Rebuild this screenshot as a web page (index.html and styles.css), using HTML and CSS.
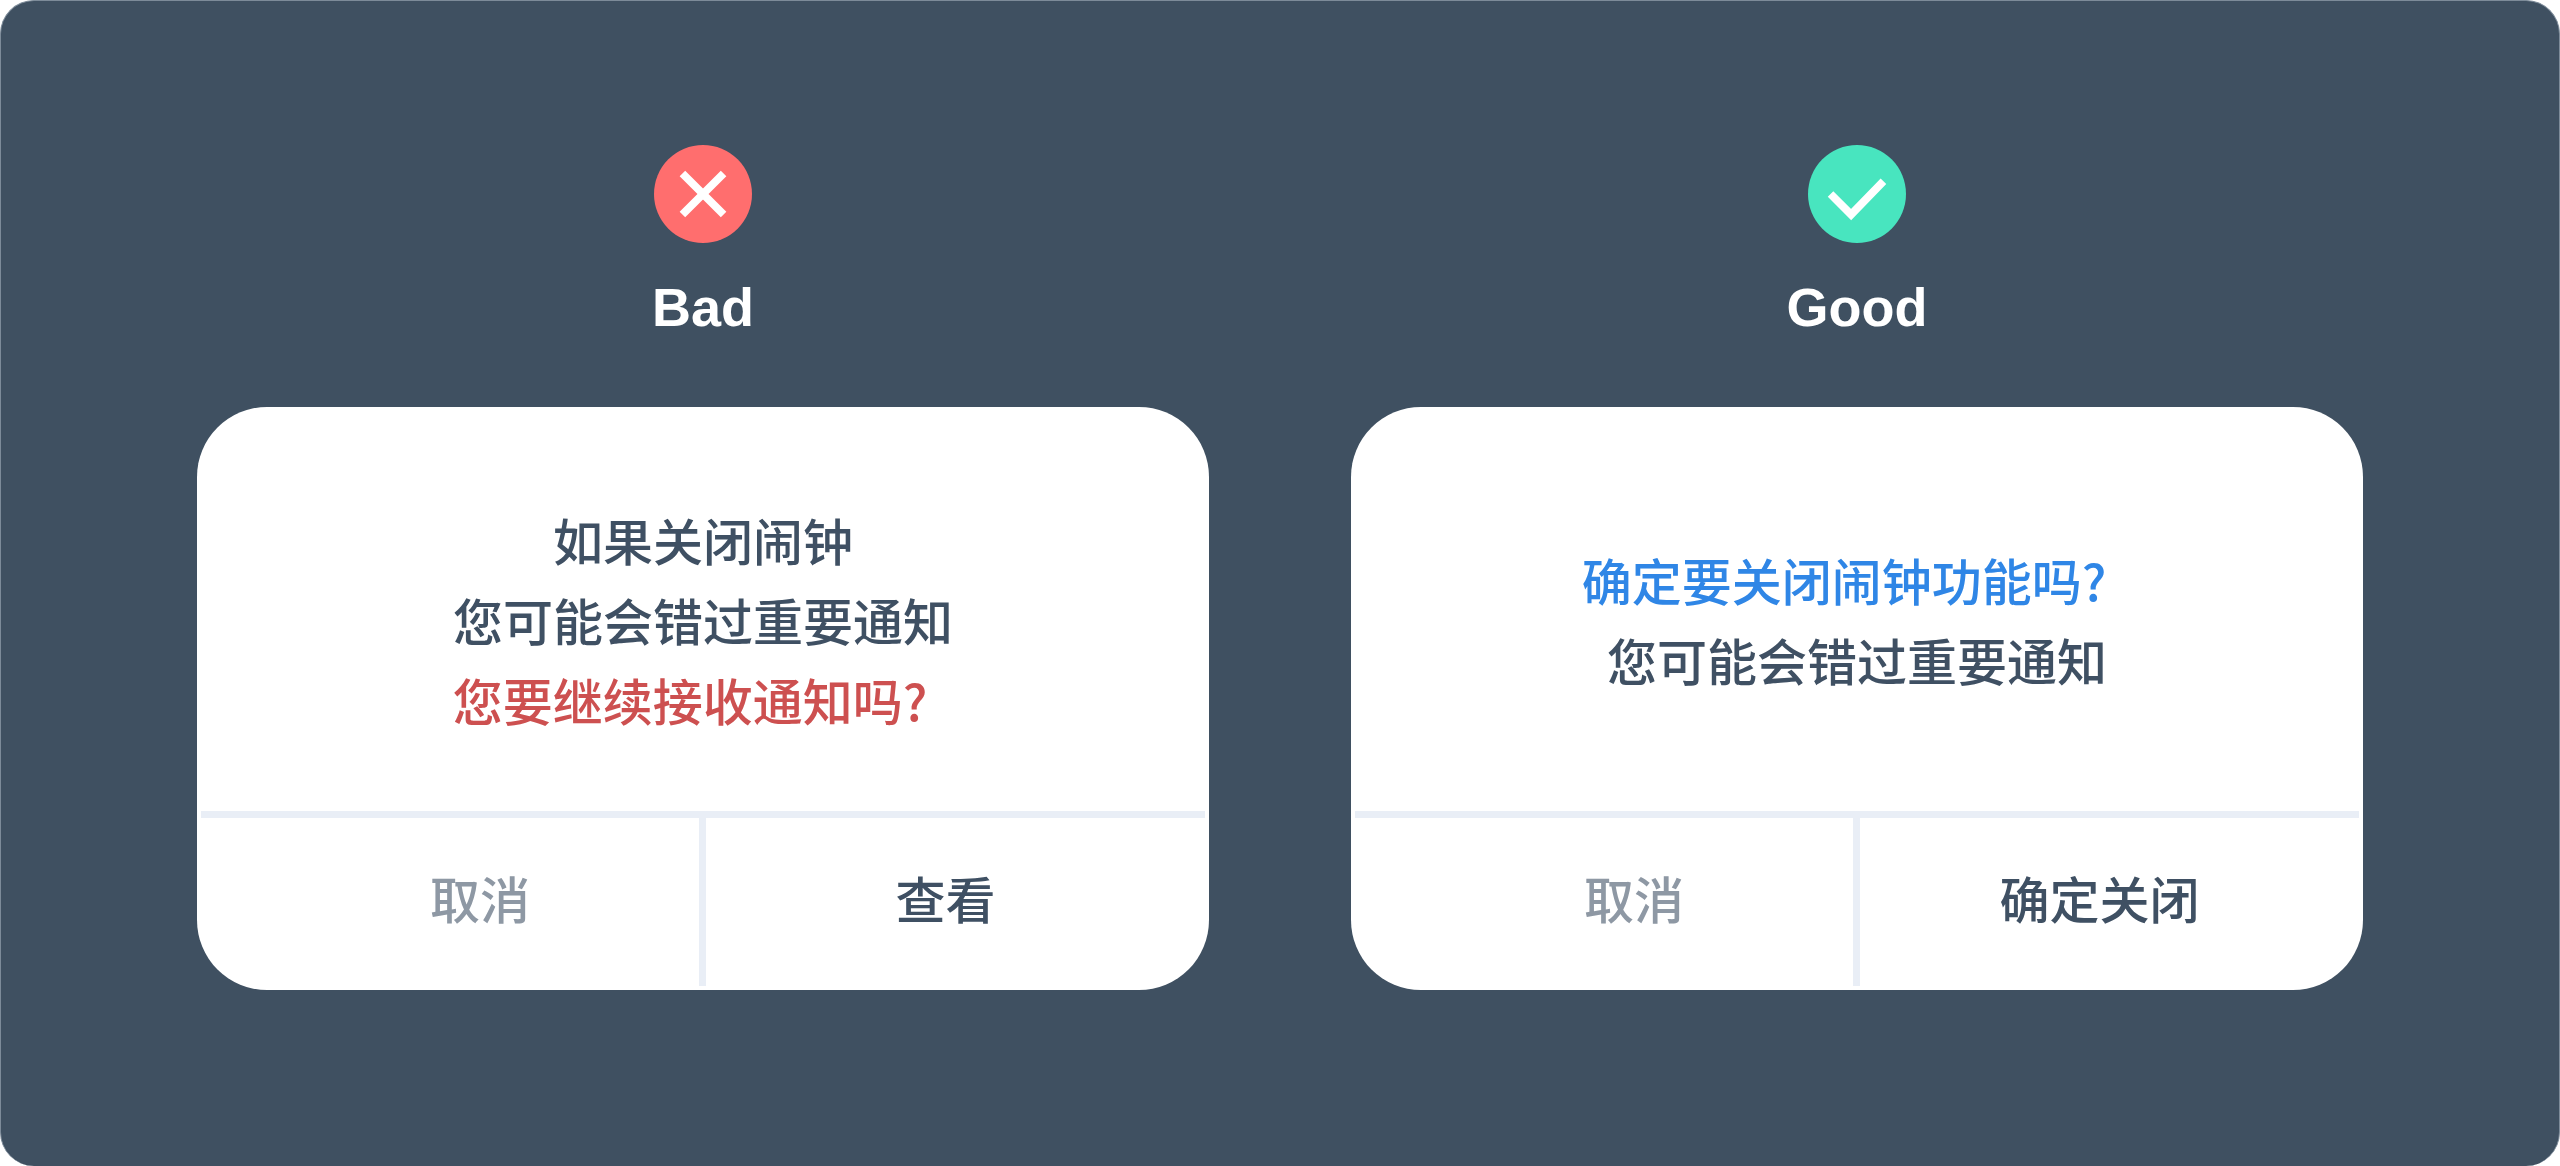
FILE: index.html
```html
<!DOCTYPE html>
<html lang="zh-CN">
<head>
    <meta charset="UTF-8">
    <meta name="viewport" content="width=device-width, initial-scale=1.0">
    <title>弹窗文案对比</title>
    <link rel="stylesheet" href="styles.css">
</head>

<body>
    <main class="panel">
        <section class="example">
            <svg class="mark" viewBox="0 0 100 100" aria-hidden="true">
                <circle cx="50" cy="50" r="50" fill="#ff6e6e" />
                <path d="M29 29 L71 71 M71 29 L29 71" fill="none" stroke="#ffffff" stroke-width="8" />
            </svg>
            <h2>Bad</h2>

            <div class="dialog">
                <div class="message">
                    <p>如果关闭闹钟</p>
                    <p>您可能会错过重要通知</p>
                    <p class="bad">您要继续接收通知吗?</p>
                </div>
                <div class="buttons">
                    <button type="button" class="cancel">取消</button>
                    <button type="button" class="confirm">查看</button>
                </div>
            </div>
        </section>

        <section class="example">
            <svg class="mark" viewBox="0 0 100 100" aria-hidden="true">
                <circle cx="50" cy="50" r="50" fill="#48e5bf" />
                <path d="M23 50 L44 71 L77 37" fill="none" stroke="#ffffff" stroke-width="8" />
            </svg>
            <h2>Good</h2>

            <div class="dialog">
                <div class="message">
                    <p class="good">确定要关闭闹钟功能吗?</p>
                    <p>您可能会错过重要通知</p>
                </div>
                <div class="buttons">
                    <button type="button" class="cancel">取消</button>
                    <button type="button" class="confirm">确定关闭</button>
                </div>
            </div>
        </section>
    </main>
</body>
</html>
```
FILE: styles.css
```css
* {
    box-sizing: border-box;
}

body {
    margin          : 0;
    background-color: #ffffff;
    color           : #3f5063;
    font-family     : "Liberation Sans", "Noto Sans CJK SC", sans-serif;
}

.panel {
    display              : grid;
    grid-template-columns: 1fr 1fr;
    gap                  : 142px;
    min-height           : 100vh;
    padding              : 144px 196px;
    border               : 1px solid #7d8b99;
    border-bottom        : none;
    border-radius        : 34px;
    background-color     : #3f5061;
}

.example {
    display       : flex;
    flex-direction: column;
    align-items   : center;
}

.mark {
    width : 98px;
    height: 98px;
}

h2 {
    margin     : 32px 0 68px;
    color      : #ffffff;
    font-size  : 54px;
    line-height: 64px;
}

.dialog {
    width           : 100%;
    padding         : 0 4px 4px;
    border-radius   : 70px;
    background-color: #ffffff;
    font-family     : "Noto Sans CJK SC", sans-serif;
    font-size       : 50px;
    font-weight     : 500;
}

.message {
    display        : flex;
    flex-direction : column;
    justify-content: center;
    min-height     : 404px;
    padding-top    : 20px;
    text-align     : center;
    line-height    : 80px;
}

.message p {
    margin: 0;
}

.message .bad,
.message .good {
    padding-right: 26px;
}

.bad {
    color: #cd5050;
}

.good {
    color: #2f86e6;
}

.buttons {
    display              : grid;
    grid-template-columns: 1fr 1fr;
    border-top           : 7px solid #e9eef6;
}

button {
    height     : 168px;
    border     : none;
    background : none;
    color      : inherit;
    font       : inherit;
    line-height: 80px;
    cursor     : pointer;
}

.cancel {
    padding     : 0 0 10px 60px;
    border-right: 4px solid #e9eef6;
    color       : #8e98a4;
}

.confirm {
    padding    : 0 20px 10px 0;
    border-left: 3px solid #e9eef6;
}
```
